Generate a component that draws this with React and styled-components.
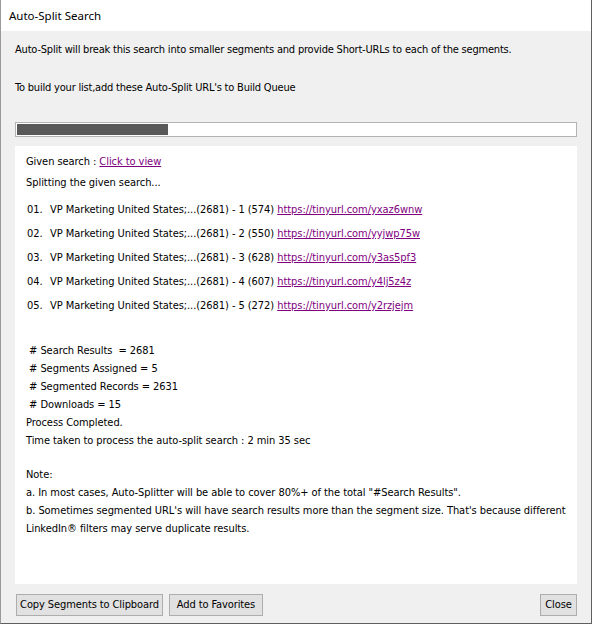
import React from "react";
import styled, { createGlobalStyle } from "styled-components";

const Global = createGlobalStyle`
  html, body { margin: 0; padding: 0; background: #f0f0f0; }
  * { box-sizing: border-box; }
`;

const Window = styled.div`
  width: 592px;
  height: 624px;
  display: flex;
  flex-direction: column;
  background: #f0f0f0;
  border-right: 1px solid #5f5f5f;
  border-bottom: 1px solid #5f5f5f;
  border-left: 1px solid #9a9a9a;
  overflow: hidden;
`;

const TitleBar = styled.div`
  height: 31px;
  flex: none;
  background: #ffffff;
  display: flex;
  align-items: center;
  padding: 0 0 0 8px;
  font-family: "Noto Sans", "Open Sans", sans-serif;
  font-size: 11.5px;
  color: #000;
`;

const Body = styled.div`
  flex: 1;
  display: flex;
  flex-direction: column;
  padding: 0 14px 0 14px;
  font-family: "DejaVu Sans Condensed", "DejaVu Sans", sans-serif;
  font-size: 11px;
  color: #000;
`;

const Desc = styled.div`
  line-height: 16px;
  margin-top: ${(p) => p.$top}px;
  letter-spacing: -0.2px;
  white-space: nowrap;
`;

const Progress = styled.div`
  margin-top: 26px;
  height: 15px;
  width: 562px;
  border: 1px solid #b4b4b4;
  background: #ffffff;
  padding: 1px;
`;

const Fill = styled.div`
  height: 11px;
  background: #595959;
`;

const Panel = styled.div`
  margin-top: 9px;
  width: 562px;
  height: 438px;
  background: #ffffff;
  padding: 7px 0 0 11px;
  display: flex;
  flex-direction: column;
  letter-spacing: -0.06px;
`;

const Line = styled.div`
  line-height: 18px;
  height: ${(p) => (p.$h ? p.$h : 18)}px;
  margin-top: ${(p) => p.$top || 0}px;
  padding-left: ${(p) => p.$indent || 0}px;
  white-space: pre;
`;

const Link = styled.a`
  color: #800080;
  text-decoration: underline;
  cursor: pointer;
`;

const Num = styled.span`
  display: inline-block;
  width: 23px;
`;

const ButtonBar = styled.div`
  display: flex;
  align-items: center;
  margin-top: 10px;
  padding-left: 1px;
  gap: 6px;
`;

const Button = styled.button`
  height: 22px;
  width: ${(p) => p.$w}px;
  padding: 0;
  background: #e1e1e1;
  border: 1px solid #adadad;
  font-family: "DejaVu Sans Condensed", "DejaVu Sans", sans-serif;
  font-size: 11px;
  letter-spacing: -0.1px;
  color: #000;
  line-height: 18px;
  white-space: nowrap;
  margin-left: ${(p) => (p.$push ? "auto" : "0")};
`;

const rows = [
  ["01.", 1, 574, "yxaz6wnw"],
  ["02.", 2, 550, "yyjwp75w"],
  ["03.", 3, 628, "y3as5pf3"],
  ["04.", 4, 607, "y4lj5z4z"],
  ["05.", 5, 272, "y2rzjejm"],
];

export default function App() {
  return (
    <>
      <Global />
      <Window>
        <TitleBar>Auto-Split Search</TitleBar>
        <Body>
          <Desc $top={11}>
            Auto-Split will break this search into smaller segments and provide Short-URLs to each of the segments.
          </Desc>
          <Desc $top={22}>To build your list,add these Auto-Split URL's to Build Queue</Desc>
          <Progress>
            <Fill style={{ width: "151px" }} />
          </Progress>
          <Panel>
            <Line>
              Given search : <Link>Click to view</Link>
            </Line>
            <Line $top={3}>Splitting the given search...</Line>
            {rows.map(([n, i, c, code], idx) => (
              <Line key={n} $top={idx === 0 ? 9 : 6} $indent={1}>
                <Num>{n}</Num>
                {`VP Marketing United States;...(2681) - ${i} (${c}) `}
                <Link>{`https://tinyurl.com/${code}`}</Link>
              </Line>
            ))}
            <Line $top={27}>{" # Search Results  = 2681"}</Line>
            <Line>{" # Segments Assigned = 5"}</Line>
            <Line>{" # Segmented Records = 2631"}</Line>
            <Line>{" # Downloads = 15"}</Line>
            <Line>Process Completed.</Line>
            <Line>Time taken to process the auto-split search : 2 min 35 sec</Line>
            <Line $h={16} />
            <Line>Note:</Line>
            <Line>a. In most cases, Auto-Splitter will be able to cover 80%+ of the total "#Search Results".</Line>
            <Line>
              b. Sometimes segmented URL's will have search results more than the segment size. That's because different
            </Line>
            <Line>LinkedIn® filters may serve duplicate results.</Line>
          </Panel>
          <ButtonBar>
            <Button $w={147}>Copy Segments to Clipboard</Button>
            <Button $w={94}>Add to Favorites</Button>
            <Button $w={37} $push>Close</Button>
          </ButtonBar>
        </Body>
      </Window>
    </>
  );
}
